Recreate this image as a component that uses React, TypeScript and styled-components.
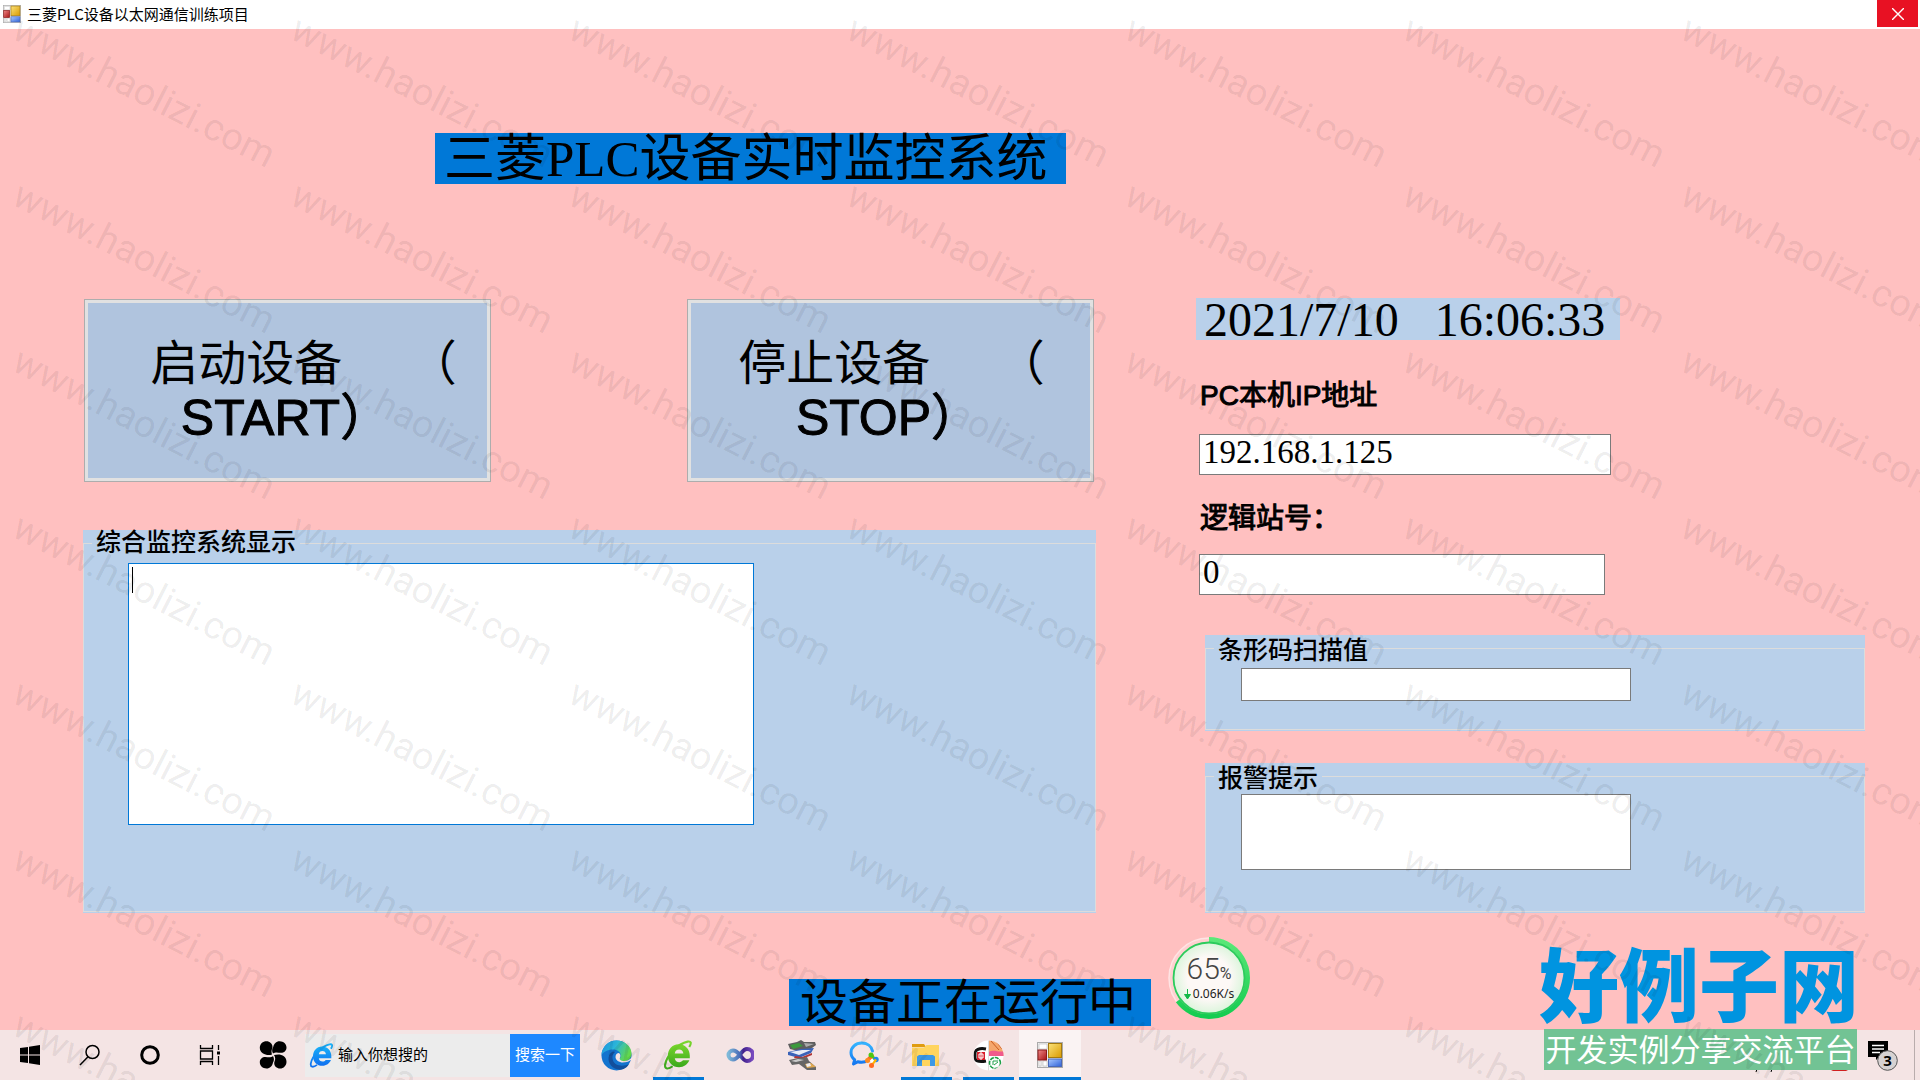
import React from "react";
import styled, { createGlobalStyle } from "styled-components";

const song = `"Liberation Serif", "Noto Sans CJK SC", serif`;
const arial = `"Liberation Sans", "Noto Sans CJK SC", sans-serif`;
const ui = `"Noto Sans CJK SC", "Noto Sans", sans-serif`;

const GlobalStyle = createGlobalStyle`
  *, *::before, *::after { box-sizing: border-box; }
  body { margin: 0; background: #ffc0c0; color: #000; }
  button, input, textarea { font: inherit; color: inherit; border-radius: 0; outline: none; }
`;

const Page = styled.div`
  position: relative;
  display: flex;
  flex-direction: column;
  min-height: 100vh;
  overflow: hidden;
  background: #ffc0c0;
`;

/* ---------- window title bar ---------- */

const TitleBar = styled.header`
  display: flex;
  align-items: center;
  height: 29px;
  padding: 0 2px 2px 3px;
  gap: 6px;
  background: #fff;
  font: 15px/27px ${ui};
`;

const CloseButton = styled.button`
  display: grid;
  place-items: center;
  align-self: flex-start;
  width: 41px;
  height: 27px;
  margin-left: auto;
  padding: 0;
  border: 0;
  background: #e81123;
`;

/* ---------- form ---------- */

const Form = styled.main`
  flex: 1;
  display: grid;
  grid-template-columns: minmax(0, 1013fr) minmax(0, 669fr);
  column-gap: 100px;
  padding: 0 55px 4px 83px;
`;

const Column = styled.div`
  display: flex;
  flex-direction: column;
  align-items: flex-start;
`;

const Heading = styled.h1`
  margin: 104px 0 0 352px;
  padding: 2px 18px 0 9px;
  background: #0078d7;
  font: 400 51px/49px ${song};
  white-space: nowrap;
`;

const ButtonRow = styled.div`
  display: flex;
  justify-content: space-between;
  align-self: stretch;
  margin-top: 115px;
  padding: 0 2px 0 1px;
`;

const DeviceButton = styled.button`
  width: 407px;
  height: 183px;
  padding: 0;
  border: 1px solid #adadad;
  box-shadow: inset 0 0 0 3px #e1e1e1;
  background: #b0c4de;
  font: 48px/55px ${arial};
`;

const NameLine = styled.span<{ $shift: number }>`
  display: block;
  padding-left: ${(p) => p.$shift}px;
  white-space: pre;
`;

const CommandLine = styled.span`
  display: block;
  padding-right: 4px;
  font-size: 50px;
  -webkit-text-stroke: 1px #000;
`;

const Status = styled.output`
  margin: 66px 0 0 706px;
  padding: 1px 15px 0 11px;
  background: #0078d7;
  font: 48px/46px ${song};
  white-space: nowrap;
`;

const Panel = styled.section<{ $top: number; $left: number }>`
  align-self: stretch;
  margin: ${(p) => p.$top}px 0 0 ${(p) => p.$left}px;
  padding-bottom: 1px;
  background: #b9d0ea;
`;

const Group = styled.fieldset<{ $height: number; $indent: number }>`
  height: ${(p) => p.$height}px;
  min-width: 0;
  margin: 0;
  padding: 0 0 0 ${(p) => p.$indent}px;
  border: 1px solid #dcdcdc;
`;

const Legend = styled.legend<{ $offset: number; $drop?: number }>`
  margin-left: ${(p) => -p.$offset}px;
  padding: ${(p) => p.$drop || 0}px 4px 0;
  font: 500 25px/${(p) => 26 - (p.$drop || 0)}px ${song};
`;

const LogArea = styled.textarea`
  display: block;
  width: 626px;
  height: 262px;
  margin-top: 7px;
  padding: 2px 3px;
  border: 1px solid #0078d7;
  resize: none;
  background: #fff linear-gradient(#000, #000) 3px 3px / 1px 26px no-repeat;
  font: 24px/28px ${song};
`;

const ScanInput = styled.input`
  display: block;
  width: 390px;
  height: 33px;
  margin-top: 7px;
  padding: 0 4px;
  border: 1px solid #7a7a7a;
  background: #fff;
  font: 24px/28px ${song};
`;

const AlarmArea = styled.textarea`
  display: block;
  width: 390px;
  height: 76px;
  margin-top: 5px;
  padding: 2px 4px;
  border: 1px solid #7a7a7a;
  resize: none;
  background: #fff;
  font: 24px/28px ${song};
`;

const Clock = styled.time`
  display: flex;
  gap: 36px;
  width: 424px;
  margin-top: 269px;
  padding: 1px 8px 0;
  background: #b9d0ea;
  font: 48px/41px ${song};
  white-space: nowrap;
`;

const FieldLabel = styled.label<{ $top: number }>`
  margin: ${(p) => p.$top}px 0 0 4px;
  font: 28px/40px ${arial};
  -webkit-text-stroke: 1px #000;
`;

const FieldInput = styled.input<{ $width: number; $top: number }>`
  width: ${(p) => p.$width}px;
  height: 41px;
  margin: ${(p) => p.$top}px 0 0 3px;
  padding: 0 3px 4px;
  border: 1px solid #7a7a7a;
  background: #fff;
  font: 33px/34px ${song};
`;

/* ---------- floating items ---------- */

const Gauge = styled.div`
  position: absolute;
  right: 669px;
  bottom: 60px;
  width: 84px;
  height: 84px;
`;

const GaugeFace = styled.svg`
  display: block;
`;

const GaugeText = styled.div`
  position: absolute;
  inset: 0;
  display: flex;
  flex-direction: column;
  align-items: center;
  padding-top: 17px;
  font-family: Roboto, sans-serif;
`;

const Percent = styled.div`
  height: 32px;
  color: #444;
  font-weight: 300;
  font-size: 30px;
  line-height: 32px;
  small { font-size: 16px; font-weight: 400; line-height: 16px; }
`;

const Speed = styled.div`
  display: flex;
  align-items: center;
  gap: 2px;
  font: 12px/18px "Noto Sans", sans-serif;
  color: #222;
`;

const Brand = styled.div`
  position: absolute;
  right: 63px;
  bottom: 10px;
  width: 313px;
`;

const BrandName = styled.div`
  color: #0094e0;
  font: 900 80px/84px ${ui};
  white-space: nowrap;
  margin: 0 -5px 7px;
`;

const BrandTag = styled.div`
  padding-bottom: 4px;
  background: #72c394;
  color: #fff;
  font: 31px/37px ${ui};
  text-align: center;
  white-space: nowrap;
`;

const Watermark = styled.div`
  position: absolute;
  inset: 0;
  overflow: hidden;
  pointer-events: none;
  display: grid;
  grid-template-columns: repeat(7, 278px);
  grid-auto-rows: 166px;
  padding: 2px 0 0 16px;
  color: rgba(0, 0, 0, 0.08);
  font: 38px/48px Roboto, sans-serif;
`;

const Mark = styled.span`
  width: max-content;
  height: 48px;
  transform: rotate(27deg);
  transform-origin: 0 50%;
`;

/* ---------- taskbar ---------- */

const Taskbar = styled.footer`
  display: flex;
  align-items: center;
  height: 50px;
  background: #f4e4e4;
`;

const TaskButton = styled.button<{ $width: number; $line?: number; $active?: boolean }>`
  display: grid;
  place-items: center;
  width: ${(p) => p.$width}px;
  height: 50px;
  padding: 0;
  border: 0;
  background: ${(p) => (p.$active ? "#faf3f3" : "transparent")};
  background-image: ${(p) => (p.$line ? "linear-gradient(#0078d7, #0078d7)" : "none")};
  background-size: ${(p) => p.$line || 0}px 3px;
  background-position: 50% 100%;
  background-repeat: no-repeat;
`;

const SearchBox = styled.form`
  display: flex;
  align-items: center;
  width: 275px;
  height: 43px;
  margin-right: 5px;
  padding-left: 4px;
  gap: 4px;
  background: #ececec;
  font: 15px/40px ${ui};
`;

const SearchInput = styled.input`
  flex: 1;
  min-width: 0;
  height: 43px;
  padding: 0 0 4px;
  border: 0;
  background: transparent;
  &::placeholder { color: #000; opacity: 1; }
`;

const SearchButton = styled.button`
  width: 70px;
  height: 43px;
  padding: 0 0 4px;
  border: 0;
  background: #1e88ff;
  color: #fff;
`;

const Tray = styled.div`
  display: flex;
  margin-left: auto;
`;

const DesktopEdge = styled.button`
  width: 6px;
  height: 50px;
  padding: 0;
  border: 0;
  border-left: 1px solid #b9adad;
  background: transparent;
`;

/* ---------- icons ---------- */

const FormIcon = ({ size }: { size: number }) => (
  <svg width={size} height={size} viewBox="0 0 26 26">
    <defs>
      <linearGradient id="fy" x2="1" y2="1"><stop stopColor="#fbe27a" /><stop offset="1" stopColor="#d99a00" /></linearGradient>
      <linearGradient id="fr" x2="1" y2="1"><stop stopColor="#e88" /><stop offset="1" stopColor="#a81414" /></linearGradient>
      <linearGradient id="fb" x2="1" y2="1"><stop stopColor="#a8c8ff" /><stop offset="1" stopColor="#2f62d8" /></linearGradient>
    </defs>
    <rect x="0.5" y="0.5" width="25" height="25" fill="#eee" stroke="#aaa" />
    <path d="M2 2h8v5H2zM2 19h2v5H2zM6 19h4v5H6z" fill="#fff" stroke="#bbb" strokeWidth="0.6" />
    <rect x="11.5" y="1.5" width="13" height="14" fill="url(#fy)" stroke="#a47a10" />
    <rect x="1" y="8" width="8.5" height="10" fill="url(#fr)" stroke="#8c1a1a" />
    <rect x="11.5" y="17" width="13" height="7.5" fill="url(#fb)" stroke="#4a68b8" />
  </svg>
);

const WindowsIcon = () => (
  <svg width="20" height="20" viewBox="0 0 20 20">
    <path d="M0 3l8-1v7.500H0zM9 1.800L20 0v9.500H9zM0 10.500h8V18l-8-1zM9 10.500h11V20L9 18.200z" />
  </svg>
);
const LensIcon = () => (
  <svg width="22" height="22" viewBox="0 0 22 22" fill="none" stroke="#000" strokeWidth="1.5">
    <circle cx="13.5" cy="8" r="6.5" /><path d="M9 12.800L1 21" />
  </svg>
);
const CortanaIcon = () => (
  <svg width="22" height="22" viewBox="0 0 22 22"><circle cx="11" cy="11" r="8.3" fill="none" stroke="#000" strokeWidth="3" /></svg>
);
const TaskViewIcon = () => (
  <svg width="22" height="22" viewBox="0 0 22 22" fill="none" stroke="#000" strokeWidth="1.3">
    <path d="M1.500 1v3.500h12V1M1.500 21v-3.500h12V21M1.500 7h12v8h-12zM19.500 1v5M19.500 12v9" />
    <path d="M18 7.500h3v3h-3z" fill="#000" stroke="none" />
  </svg>
);
const PetalIcon = () => (
  <svg width="28" height="28" viewBox="0 0 28 28">
    <path d="M13 13.500C9 15 .8 13.500.8 6.800.8 3 3.800.3 7.500.3c3.300 0 6 2.500 6 5.700 0 1.500-1 2.500-1 4.500 0 1.200.2 2 .5 3z" />
    <path d="M14 12.500c-1.500-3-.8-5 .2-6.500C15 3 17 .300 20.700.300c3.800 0 6.800 2.800 6.800 6.200 0 3.300-2.500 5.300-5.500 5.300-3 0-5-1.300-8 .7z" />
    <path d="M15 14c5-1.500 12.500-.500 12.500 6.700 0 3.800-2.800 6.800-6.500 6.800-3.200 0-5.800-2.300-5.800-5.500 0-1.500 1-2.500 1-4.500 0-1.200-.5-2.300-1.200-3.500z" />
    <path d="M14 15c1.500 3 1 5 0 6.500-.7 3.500-3 6-6.500 6-3.800 0-6.700-2.800-6.700-6.200 0-3.300 2.500-5.300 5.500-5.300 3 0 5 1.200 7.700-1z" />
  </svg>
);
const IeIcon = ({ from, to, size }: { from: string; to: string; size: number }) => (
  <svg width={size} height={size} viewBox="0 0 28 28">
    <defs><linearGradient id={"ie" + size} y2="1" x2="0"><stop stopColor={from} /><stop offset="1" stopColor={to} /></linearGradient></defs>
    <path fill={`url(#ie${size})`} fillRule="evenodd" d="M14.500 4C20.500 4 25 8.500 25 14.500V17H11c.3 2.300 2 3.700 4.200 3.700 1.500 0 2.700-.600 3.400-1.700h6C23 22.700 19.500 25.500 15 25.500c-6 0-10.500-4.500-10.500-10.500S8.500 4 14.500 4zM11 12.500h8c-.2-2.200-1.800-3.600-4-3.600s-3.800 1.400-4 3.600z" />
    <path fill="none" stroke={`url(#ie${size})`} strokeWidth="2" d="M24.500 6.500C27 2.500 26 1 23 1.500 14 3.500 3.500 14 2 23c-.6 4.500 3 4.500 7 1.500" />
  </svg>
);
const EdgeIcon = () => (
  <svg width="31" height="31" viewBox="0 0 31 31">
    <defs>
      <linearGradient id="e1" x2="1" y2="0.4"><stop stopColor="#1b8fe0" /><stop offset=".5" stopColor="#2bb6d8" /><stop offset="1" stopColor="#62d84e" /></linearGradient>
    </defs>
    <circle cx="15.5" cy="15.5" r="15" fill="#1374cf" />
    <path d="M.5 15C1 6.500 7.500.5 15.500.5 24 .5 30.500 6.500 30.500 13.500c0 5-3.500 7.500-7.500 7.500-2.500 0-4.500-.8-4.500-1.800 0-.7 1.200-1.500 1.200-3.700 0-3.500-3.200-6-7.700-6C6.500 9.500 2 12 .5 15z" fill="url(#e1)" />
    <path d="M31 19c-2.500 2.500-5.500 3.500-9 3.500-4 0-7.500-2.500-7.500-5.500 0-2.500 1.500-4 3.500-4 1.500 1 1.800 2.800 1 4.500-.8 1.800.5 3.500 4 3.500 3 0 5.500-1 8-4z" fill="#f4e4e4" />
    <path d="M12 11.500c-5 2-6 9-2 14 3 3.800 8 5 12.500 3.500 2.500-1 4.500-2.800 5.500-5-6 3-14 2-16-3.500-1.200-3.500-.5-6.500 2-8.500z" fill="#124f9c" />
  </svg>
);
const VsIcon = () => (
  <svg width="28" height="18" viewBox="0 0 28 18" fill="none" strokeWidth="4">
    <defs><linearGradient id="vs"><stop stopColor="#7db8d8" /><stop offset=".45" stopColor="#4a6cb8" /><stop offset=".6" stopColor="#42208c" /><stop offset="1" stopColor="#7a4cc0" /></linearGradient></defs>
    <path stroke="url(#vs)" d="M14 9C11 5.500 9 4.500 7 4.500a4.500 4.500 0 000 9c3 0 5-2.500 7-5s4-5.500 7-5.500a5.700 5.700 0 010 12c-3 0-5-3-7-6z" />
  </svg>
);
const BooksIcon = () => (
  <svg width="30" height="30" viewBox="0 0 30 30">
    <path d="M1 4l9-2 4-2 3 2h11l1 3-4 3-2 2-12 1-8-2z" fill="#5e5e5e" /><path d="M3 5l9-2 4 3-10 3z" fill="#3c9a3c" /><path d="M17 3l10 1-8 3z" fill="#aaa" />
    <path d="M1 12l13-3 13-1-3 5-12 5-11-3z" fill="#3a62b8" /><path d="M3 12l12-2h9l-12 5z" fill="#e8ecf6" /><path d="M8 16l7 1 10-4v2l-10 4-8-1z" fill="#b03434" />
    <path d="M2 20l9-2 9-1 2 4 7 6v3h-9l-8-6-7 1z" fill="#666" /><path d="M4 21l7-2 6 1-8 2z" fill="#ccc" /><path d="M18 24l6-1 5 4-9 1z" fill="#e0a850" /><path d="M19 24l4-1 1 3-4 1z" fill="#ececf4" />
  </svg>
);
const ChatIcon = () => (
  <svg width="30" height="28" viewBox="0 0 30 28">
    <defs><linearGradient id="ch" x2="0" y2="1"><stop stopColor="#35b4ff" /><stop offset="1" stopColor="#1577f0" /></linearGradient></defs>
    <path d="M23.500 10C22.500 5 18 2 12.800 2 6.500 2 2 6.200 2 11.500c0 3 1.300 5.500 3.700 7.200L4.500 23l4.500-2.300c2 .6 4.500.6 7 .1" fill="none" stroke="url(#ch)" strokeWidth="3" strokeLinecap="round" strokeLinejoin="round" />
    <path d="M19 19l4-4" stroke="#ff6a20" strokeWidth="4" strokeLinecap="round" /><circle cx="22" cy="14" r="2.5" fill="#4cc813" />
    <path d="M22 14l4 4" stroke="#4cc813" strokeWidth="2.5" /><circle cx="27" cy="18.5" r="2.7" fill="#1c86f2" />
    <path d="M27 18.500l-4 5" stroke="#ffb400" strokeWidth="2.5" /><circle cx="22.5" cy="24.5" r="2.5" fill="#ff6a20" /><circle cx="18.5" cy="19.5" r="2.5" fill="#ff8a20" />
    <path d="M21 19.500l2-2 2 2-2 2.500z" fill="#fff" />
  </svg>
);
const FolderIcon = () => (
  <svg width="28" height="24" viewBox="0 0 28 24">
    <path d="M0 1h12l2 3H0z" fill="#e09c10" /><path d="M0 4.500h12L14.500 2H27v21H0z" fill="#ffd45e" />
    <path d="M5 23V13.500L7 12h14l2 1.500V23h-5v-6h-8v6z" fill="#3d98e4" />
  </svg>
);
const CollageIcon = () => (
  <svg width="31" height="31" viewBox="0 0 31 31">
    <defs><clipPath id="cc"><circle cx="15.5" cy="15.5" r="15" /></clipPath></defs>
    <g clipPath="url(#cc)">
      <path d="M0 0h31v31H0z" fill="#fff" />
      <path d="M2 12c2-3 6-4 11-3M2 11v8c2 3 6 3 11 2" fill="none" stroke="#111" strokeWidth="3" /><path d="M4 12h8v8H4z" fill="#d81e2c" /><path d="M6 14h4v4H6zM8 12v8" fill="none" stroke="#fff" />
      <path d="M16 0h15v16H16z" fill="#f5a76c" /><path d="M16 12c5-3 10 1 15-1v5H16z" fill="#f05a8c" /><path d="M18 1l8 9M22 0l7 9" stroke="#c85a20" />
      <path d="M15.500 0v31" stroke="#ddd" /><circle cx="22" cy="23" r="5.5" fill="none" stroke="#1fa048" strokeWidth="1.600" strokeDasharray="4 1" /><path d="M20 25v-4h5M21 25l4-3" fill="none" stroke="#1fa048" />
    </g>
  </svg>
);
const NoticeIcon = () => (
  <svg width="32" height="32" viewBox="0 0 32 32">
    <path d="M2 2h20v16H13l-3 3v-3H2z" /><path d="M6 6.500h12M6 10h12M6 13.500h8" stroke="#fff" strokeWidth="1.300" />
    <circle cx="21.5" cy="21.5" r="9.8" fill="#d6d2d2" stroke="#555" />
    <text x="21.5" y="27" textAnchor="middle" fontFamily="Noto Sans" fontSize="15" fontWeight="700">3</text>
  </svg>
);
const TrayMarks = () => (
  <svg width="110" height="50" viewBox="0 0 110 50">
    <path d="M17 39l-1 3M32 39l-1 3" stroke="#000" />
    <path d="M91 40h17l-2 1H93z" fill="#d02020" />
  </svg>
);

const apps = [
  { name: "Edge", icon: <EdgeIcon />, line: 0 },
  { name: "Browser", icon: <IeIcon from="#7ad62c" to="#3aa81c" size={30} />, line: 51 },
  { name: "Visual Studio", icon: <VsIcon />, line: 0 },
  { name: "Books", icon: <BooksIcon />, line: 0 },
  { name: "Chat", icon: <ChatIcon />, line: 0 },
  { name: "Folder", icon: <FolderIcon />, line: 51 },
  { name: "Collage", icon: <CollageIcon />, line: 51 },
  { name: "Form", icon: <FormIcon size={26} />, line: 62 },
];

export default function App() {
  return (
    <Page>
      <GlobalStyle />
      <TitleBar>
        <FormIcon size={18} />
        <span>三菱PLC设备以太网通信训练项目</span>
        <CloseButton aria-label="关闭">
          <svg width="12" height="12" viewBox="0 0 12 12" stroke="#fff" strokeWidth="1.4"><path d="M0 0l12 12M12 0L0 12" /></svg>
        </CloseButton>
      </TitleBar>

      <Form>
        <Column>
          <Heading>三菱PLC设备实时监控系统</Heading>
          <ButtonRow>
            <DeviceButton>
              <NameLine $shift={32}>启动设备{"     "}（</NameLine>
              <CommandLine>START）</CommandLine>
            </DeviceButton>
            <DeviceButton>
              <NameLine $shift={2}>停止设备{"     "}（</NameLine>
              <CommandLine>STOP）</CommandLine>
            </DeviceButton>
          </ButtonRow>
          <Panel $top={48} $left={0}>
            <Group $height={382} $indent={44}>
              <Legend $offset={36}>综合监控系统显示</Legend>
              <LogArea aria-label="综合监控系统显示" />
            </Group>
          </Panel>
          <Status>设备正在运行中</Status>
        </Column>

        <Column>
          <Clock>
            <span>2021/7/10</span>
            <span>16:06:33</span>
          </Clock>
          <FieldLabel htmlFor="ip" $top={36}>PC本机IP地址</FieldLabel>
          <FieldInput id="ip" defaultValue="192.168.1.125" $width={412} $top={18} />
          <FieldLabel htmlFor="station" $top={24}>逻辑站号：</FieldLabel>
          <FieldInput id="station" defaultValue="0" $width={406} $top={15} />
          <Panel $top={40} $left={9}>
            <Group $height={95} $indent={35}>
              <Legend $offset={27} $drop={6}>条形码扫描值</Legend>
              <ScanInput aria-label="条形码扫描值" />
            </Group>
          </Panel>
          <Panel $top={32} $left={9}>
            <Group $height={149} $indent={35}>
              <Legend $offset={27} $drop={6}>报警提示</Legend>
              <AlarmArea aria-label="报警提示" />
            </Group>
          </Panel>
        </Column>
      </Form>

      <Taskbar>
        <TaskButton $width={60} aria-label="开始"><WindowsIcon /></TaskButton>
        <TaskButton $width={60} aria-label="搜索"><LensIcon /></TaskButton>
        <TaskButton $width={60} aria-label="Cortana"><CortanaIcon /></TaskButton>
        <TaskButton $width={60} aria-label="任务视图"><TaskViewIcon /></TaskButton>
        <TaskButton $width={65} aria-label="启动器"><PetalIcon /></TaskButton>
        <SearchBox onSubmit={(e) => e.preventDefault()}>
          <IeIcon from="#18b0f8" to="#1070f0" size={25} />
          <SearchInput aria-label="搜索内容" placeholder="输入你想搜的" />
          <SearchButton>搜索一下</SearchButton>
        </SearchBox>
        {apps.map((app) => (
          <TaskButton key={app.name} $width={62} $line={app.line} $active={app.line === 62} aria-label={app.name}>
            {app.icon}
          </TaskButton>
        ))}
        <Tray>
          <TrayMarks />
          <TaskButton $width={64} aria-label="通知"><NoticeIcon /></TaskButton>
          <DesktopEdge aria-label="显示桌面" />
        </Tray>
      </Taskbar>

      <Gauge>
        <GaugeFace width="84" height="84" viewBox="0 0 84 84">
          <defs>
            <linearGradient id="gr" x2="0" y2="1"><stop stopColor="#5ae878" /><stop offset="1" stopColor="#14cc50" /></linearGradient>
            <radialGradient id="gf"><stop offset=".6" stopColor="#fdf8f6" /><stop offset="1" stopColor="#dcf5dc" /></radialGradient>
          </defs>
          <circle cx="42" cy="42" r="40" fill="#ffd0d0" stroke="#ffe4e4" strokeWidth="1.5" />
          <path d="M42 3.500A38.500 38.500 0 1 1 10.900 64.700" fill="none" stroke="url(#gr)" strokeWidth="5" />
          <circle cx="42" cy="42" r="35.5" fill="url(#gf)" stroke="#2ccc5c" strokeWidth="1.8" />
        </GaugeFace>
        <GaugeText>
          <Percent>65<small>%</small></Percent>
          <Speed>
            <svg width="7" height="10" viewBox="0 0 7 10"><path d="M3.500 0v7M.5 5.500h6L3.500 10z" fill="#14b848" stroke="#14b848" /></svg>
            0.06K/s
          </Speed>
        </GaugeText>
      </Gauge>

      <Brand>
        <BrandName>好例子网</BrandName>
        <BrandTag>开发实例分享交流平台</BrandTag>
      </Brand>

      <Watermark aria-hidden="true">
        {Array.from({ length: 49 }, (_, i) => (
          <Mark key={i}>www.haolizi.com</Mark>
        ))}
      </Watermark>
    </Page>
  );
}
